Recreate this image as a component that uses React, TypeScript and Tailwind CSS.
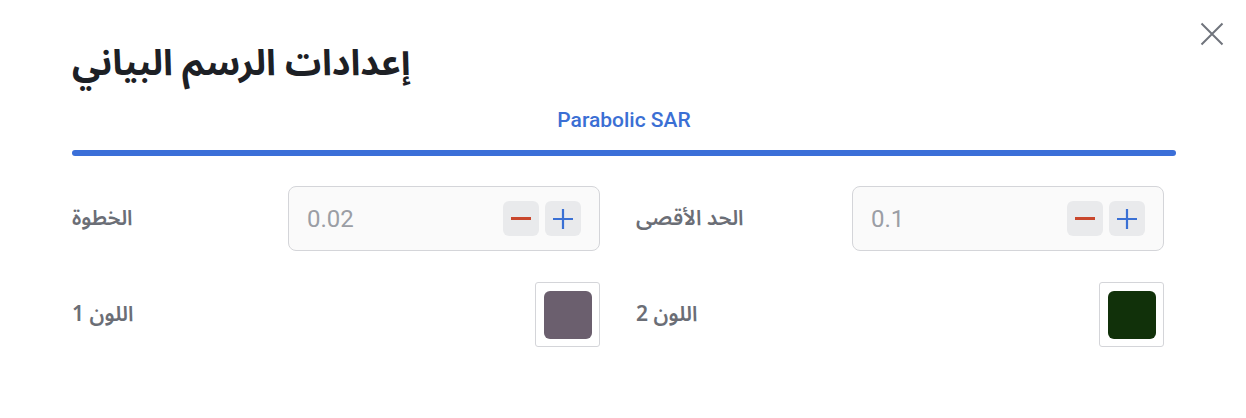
import React, { useState } from 'react'

const arabic = { fontFamily: '"Noto Sans Arabic", "DejaVu Sans", "Noto Sans", sans-serif' }

type StepperProps = {
    value: string
    onMinus: () => void
    onPlus: () => void
}

const Stepper: React.FC<StepperProps> = ({ value, onMinus, onPlus }) => {
    return (
        <div className="flex h-[65px] w-[312px] items-center justify-between rounded-lg border border-[#d4d5d9] bg-[#fafafa] pl-[18px] pr-[18px]">
            <span className="font-['Roboto'] text-[24px] text-[#9b9ea5]">{value}</span>
            <div className="flex gap-[6px]">
                <button
                    type="button"
                    onClick={onMinus}
                    className="flex h-[35px] w-[36px] items-center justify-center rounded-md bg-[#e9eaec]"
                >
                    <span className="block h-[2.5px] w-[20px] bg-[#c9472d]" />
                </button>
                <button
                    type="button"
                    onClick={onPlus}
                    className="flex h-[35px] w-[36px] items-center justify-center rounded-md bg-[#e9eaec]"
                >
                    <svg width="20" height="20" viewBox="0 0 20 20">
                        <path d="M10 0v20M0 10h20" stroke="#3a70d4" strokeWidth="2.2" />
                    </svg>
                </button>
            </div>
        </div>
    )
}

const Swatch: React.FC<{ color: string }> = ({ color }) => (
    <div className="flex h-[65px] w-[65px] items-center justify-center rounded-[3px] border border-[#d4d5d9] bg-white">
        <div className="h-[48px] w-[48px] rounded-md" style={{ backgroundColor: color }} />
    </div>
)

const Label: React.FC<{ text: string }> = ({ text }) => (
    <span className="text-[21px] font-semibold text-[#6b6e76]" style={arabic} dir="rtl">
        {text}
    </span>
)

const App: React.FC = () => {
    const [step, setStep] = useState(0.02)
    const [max, setMax] = useState(0.1)

    const round = (n: number) => Math.round(n * 100) / 100

    return (
        <div className="relative h-[418px] w-full bg-white pl-[72px] pr-[70px]">
            <button type="button" className="absolute right-[22px] top-[22px] text-[#70747c]">
                <svg width="24" height="24" viewBox="0 0 24 24">
                    <path d="M1.5 1.5l21 21M22.5 1.5l-21 21" stroke="currentColor" strokeWidth="2" />
                </svg>
            </button>

            <h2 className="pt-[36px] text-left text-[36px] font-bold leading-[56px] text-[#1d2025]" style={arabic}>
                <span className="inline-block" dir="rtl">إعدادات الرسم البياني</span>
            </h2>

            <div className="mt-[15px] flex flex-col items-center">
                <span className="font-['Roboto'] text-[21px] font-medium leading-[26px] text-[#3b6fd4]">Parabolic SAR</span>
                <div className="mt-[17px] h-[6px] w-full rounded-full bg-[#3b6fd8]" />
            </div>

            <div className="mt-[30px] grid w-[1092px] grid-cols-2 gap-x-[36px] gap-y-[31px]">
                <div className="flex items-center justify-between">
                    <Label text="الخطوة" />
                    <Stepper
                        value={String(step)}
                        onMinus={() => setStep(round(step - 0.01))}
                        onPlus={() => setStep(round(step + 0.01))}
                    />
                </div>
                <div className="flex items-center justify-between">
                    <Label text="الحد الأقصى" />
                    <Stepper
                        value={String(max)}
                        onMinus={() => setMax(round(max - 0.1))}
                        onPlus={() => setMax(round(max + 0.1))}
                    />
                </div>
                <div className="flex items-center justify-between">
                    <Label text="اللون 1" />
                    <Swatch color="#6b5f6e" />
                </div>
                <div className="flex items-center justify-between">
                    <Label text="اللون 2" />
                    <Swatch color="#11310a" />
                </div>
            </div>
        </div>
    )
}

export default App
